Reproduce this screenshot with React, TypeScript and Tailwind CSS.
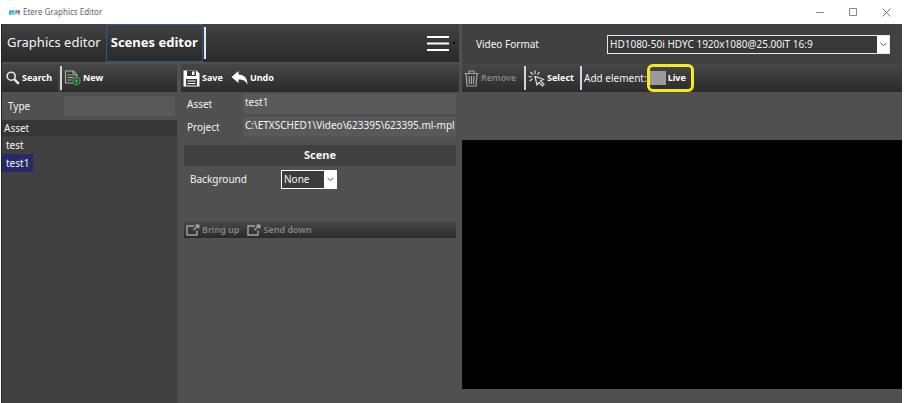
import { useState } from "react";
import type { ReactNode } from "react";

const scenes = ["test", "test1"];

const toolbar = "flex items-center bg-gradient-to-b from-[#474747] to-[#2b2b2b]";
const field = "h-5 min-w-0 flex-1 bg-[#595959] pb-1 pl-[2px] text-[10px] text-gray-100 outline-none";

function SearchIcon() {
  return (
    <svg className="shrink-0" width="14" height="14" viewBox="0 0 14 14" fill="none" stroke="#e8e8e8">
      <circle cx="5.2" cy="5.2" r="4" strokeWidth="1.6" />
      <path d="M8.2 8.2l4.6 4.6" strokeWidth="2.4" />
    </svg>
  );
}

function NewIcon() {
  return (
    <svg className="shrink-0" width="17" height="16" viewBox="0 0 17 16" fill="none" stroke="#a9b5a9" strokeWidth="1.1">
      <path d="M13 7V5L9.500 1H1.500v12H9" />
      <path d="M9 1v4h4M3.500 5h4M3.500 7.500h6M3.500 10h4" />
      <circle cx="12.500" cy="11" r="3.500" stroke="#3f9a46" fill="#2c3a2d" strokeWidth="1.300" />
      <path d="M12.500 9v4M10.500 11h4" stroke="#55b45b" />
    </svg>
  );
}

function SaveIcon() {
  return (
    <svg className="shrink-0" width="17" height="17" viewBox="0 0 17 17">
      <path d="M0.500 0.500h13l3 3v13h-16z" fill="#fff" />
      <path d="M4 0.500h9v5.500H4zM3 9h11v6.500H3z" fill="#383838" />
      <path d="M9 1.500h2.500v3.500H9zM4.500 10.500h8v1h-8zM4.500 13h8v1h-8z" fill="#fff" />
    </svg>
  );
}

function UndoIcon() {
  return (
    <svg className="shrink-0" width="17" height="14" viewBox="0 0 17 14" fill="#fff">
      <path d="M7.500 0v3.500C13 3.500 16.500 7 16.500 13.500C14.500 9.500 12 8.500 7.500 8.500V12L0.500 6z" />
    </svg>
  );
}

function TrashIcon() {
  return (
    <svg className="shrink-0" width="15" height="17" viewBox="0 0 15 17" fill="none" stroke="#a3a3a3" strokeWidth="1.200">
      <path d="M0.500 3.500h14M5 3.500v-2.500h5v2.500M2 3.500l1 12.500h9l1-12.500" />
      <path d="M5 6l0.500 8M7.500 6v8M10 6l-0.500 8" />
    </svg>
  );
}

function SelectIcon() {
  return (
    <svg className="shrink-0" width="17" height="17" viewBox="0 0 17 17" fill="none" stroke="#e0e0e0" strokeWidth="1.200">
      <path d="M7 0.500v3.500M2.500 2l2.200 2.700M0.500 6.500l3.500 0.500M1.500 11l3-2M11.500 2l-2 2.700" />
      <path d="M7 6.500l2 8.500 2-2.500 3.300 3.500 1.700-1.700-3.500-3.300 2.800-1.700z" />
    </svg>
  );
}

function LayerIcon() {
  return (
    <svg className="shrink-0" width="14" height="12" viewBox="0 0 14 12" fill="none" stroke="#a3a3a3" strokeWidth="1.400">
      <path d="M8 2H1v9h10V6.500" />
      <path d="M7.500 6l3-3" />
      <path d="M9.500 0.500h4v3.500l-1.500 0.500-2.500-2.500z" fill="#a3a3a3" stroke="none" />
    </svg>
  );
}

function Chevron() {
  return (
    <span className="pointer-events-none absolute inset-y-0 right-0 flex w-3 items-center justify-center bg-white">
      <svg width="7" height="5" viewBox="0 0 7 5" fill="none" stroke="#555">
        <path d="M0.500 1l3 2.500 3-2.500" />
      </svg>
    </span>
  );
}

function ToolButton({ icon, children, disabled }: { icon: ReactNode; children: ReactNode; disabled?: boolean }) {
  return (
    <button
      disabled={disabled}
      className="flex items-center gap-[2px] text-[9px] font-bold whitespace-nowrap text-white disabled:font-semibold disabled:text-[#858585]"
    >
      {icon}
      {children}
    </button>
  );
}

function Divider() {
  return <span className="w-[2px] shrink-0 self-stretch bg-gray-300" />;
}

function TitleBar() {
  return (
    <header className="flex h-6 items-center bg-white pl-2 text-[8px] text-[#666]">
      <svg width="11" height="5" viewBox="0 0 11 5" fill="none" strokeWidth="1.300">
        <path d="M0.500 2.500h2M0.500 1h2v1.500M0.500 1v3h2M4 0v4h1.500M3.500 1.500h2" stroke="#35b3c4" />
        <path d="M7 4V1h1.500" stroke="#4a7fc0" />
        <path d="M9 1h1.500v1.500H9zM9 4h1.500" stroke="#c45aa8" />
      </svg>
      <h1 className="ml-[3px] flex-1">Etere Graphics Editor</h1>
      <div className="flex gap-6 pr-[11px]">
        <button aria-label="Minimize">
          <svg width="9" height="9" fill="none" stroke="#888"><path d="M0 4.500h8" /></svg>
        </button>
        <button aria-label="Maximize">
          <svg width="9" height="9" fill="none" stroke="#888"><path d="M0.500 0.500h7v7h-7z" /></svg>
        </button>
        <button aria-label="Close">
          <svg width="9" height="9" fill="none" stroke="#777"><path d="M0.500 0.500l8 8M8.500 0.500l-8 8" /></svg>
        </button>
      </div>
    </header>
  );
}

function ScenesPanel({ selected, onSelect }: { selected: string; onSelect: (name: string) => void }) {
  return (
    <section className="flex flex-col">
      <div className="flex h-7">
        <div className={`${toolbar} w-14 pl-1`}>
          <ToolButton icon={<SearchIcon />}>Search</ToolButton>
        </div>
        <div className="flex bg-[#444] py-[2px] pl-[2px]"><Divider /></div>
        <div className={`${toolbar} flex-1 pl-[2px]`}>
          <ToolButton icon={<NewIcon />}>New</ToolButton>
        </div>
      </div>
      <div className="flex h-7 items-center pr-[2px] pl-[6px]">
        <label htmlFor="type" className="w-14">Type</label>
        <input id="type" className={field} />
      </div>
      <div className="flex-1 bg-[#404040]">
        <h2 className="flex h-4 items-center bg-[#363636] pl-[2px]">Asset</h2>
        <ul className="flex flex-col items-start">
          {scenes.map((name) => (
            <li key={name}>
              <button
                onClick={() => onSelect(name)}
                className={`flex h-[18px] items-center px-1 ${selected === name ? "bg-[#282868]" : ""}`}
              >
                {name}
              </button>
            </li>
          ))}
        </ul>
      </div>
    </section>
  );
}

function ScenePanel({ asset }: { asset: string }) {
  return (
    <section className="flex flex-col">
      <div className={`${toolbar} h-7 gap-2 pl-[2px]`}>
        <ToolButton icon={<SaveIcon />}>Save</ToolButton>
        <ToolButton icon={<UndoIcon />}>Undo</ToolButton>
      </div>
      <div className="flex flex-col gap-[3px] pt-[2px] pr-[3px] pl-[6px]">
        <div className="flex items-center">
          <label htmlFor="asset" className="w-14">Asset</label>
          <input id="asset" className={field} value={asset} readOnly />
        </div>
        <div className="flex items-center">
          <label htmlFor="project" className="w-14">Project</label>
          <input id="project" className={field} defaultValue="C:\ETXSCHED1\Video\623395\623395.ml-mpl" />
        </div>
      </div>
      <div className="flex flex-col pt-2 pr-[3px] pl-[3px]">
        <h2 className="flex h-[21px] items-center justify-center bg-[#404040] text-[11px] font-bold">Scene</h2>
        <div className="flex items-center pt-1 pl-[6px]">
          <label htmlFor="background" className="w-[91px]">Background</label>
          <span className="relative w-14 border border-white">
            <select id="background" className="block h-[17px] w-full appearance-none bg-[#3b3b3b] pl-[2px] text-[10px] outline-none">
              <option>None</option>
            </select>
            <Chevron />
          </span>
        </div>
        <div className={`${toolbar} mt-[33px] h-4 gap-2 pl-[2px]`}>
          <ToolButton icon={<LayerIcon />} disabled>Bring up</ToolButton>
          <ToolButton icon={<LayerIcon />} disabled>Send down</ToolButton>
        </div>
      </div>
    </section>
  );
}

function PreviewPanel() {
  return (
    <section className="flex flex-col">
      <div className="flex h-10 items-center justify-between bg-[#414141] pr-3 pl-[14px]">
        <label htmlFor="format">Video Format</label>
        <span className="relative w-[283px] border border-gray-200">
          <select id="format" className="block h-[17px] w-full appearance-none bg-[#383838] pl-[2px] text-[10px] outline-none">
            <option>HD1080-50i HDYC 1920x1080@25.00iT 16:9</option>
          </select>
          <Chevron />
        </span>
      </div>
      <div className={`${toolbar} h-7`}>
        <div className="w-[62px] shrink-0 pl-[2px]">
          <ToolButton icon={<TrashIcon />} disabled>Remove</ToolButton>
        </div>
        <div className="flex h-6"><Divider /></div>
        <div className="w-[54px] shrink-0 pl-[2px]">
          <ToolButton icon={<SelectIcon />}>Select</ToolButton>
        </div>
        <div className="flex h-6"><Divider /></div>
        <span className="pl-[2px] whitespace-nowrap">Add element:</span>
        <div className="flex h-7 items-center rounded-md border-3 border-[#f7ea1c] pr-[5px]">
          <ToolButton icon={<span className="h-[14px] w-4 bg-[#9b9b9b]" />}>Live</ToolButton>
        </div>
      </div>
      <div className="h-12" />
      <div className="flex-1 bg-black" />
      <div className="h-[14px]" />
    </section>
  );
}

export default function App() {
  const [selected, setSelected] = useState("test1");
  const [tab, setTab] = useState("scenes");

  return (
    <div className="flex min-h-screen flex-col bg-white pr-[3px] pl-px font-['Noto_Sans',sans-serif] text-[10px] text-gray-100">
      <TitleBar />
      <main className="grid flex-1 grid-cols-[minmax(0,457fr)_minmax(0,440fr)] gap-[3px] border-l border-[#222] bg-[#505050]">
        <div className="flex flex-col">
          <nav className="flex h-[38px] items-center bg-gradient-to-b from-[#414141] to-[#2a2a2a] text-[13px]">
            <button
              onClick={() => setTab("graphics")}
              className={`h-full border px-1 ${tab === "graphics" ? "border-[#285a8c] font-bold text-white" : "border-transparent"}`}
            >
              Graphics editor
            </button>
            <button
              onClick={() => setTab("scenes")}
              className={`h-full border px-1 ${tab === "scenes" ? "border-[#285a8c] font-bold text-white" : "border-transparent"}`}
            >
              Scenes editor
            </button>
            <span className="ml-px h-8 w-[2px] bg-gray-200" />
            <button aria-label="Menu" className="ml-auto flex items-center gap-1 pr-1">
              <svg width="22" height="15" viewBox="0 0 22 15" stroke="#fff" strokeWidth="2">
                <path d="M0 1h22M0 7.500h22M0 14h22" />
              </svg>
              <span className="h-[2px] w-[2px] bg-[#111]" />
            </button>
          </nav>
          <div className="grid flex-1 grid-cols-[minmax(0,175fr)_minmax(0,278fr)] gap-1 pt-[2px]">
            <ScenesPanel selected={selected} onSelect={setSelected} />
            <ScenePanel asset={selected} />
          </div>
        </div>
        <PreviewPanel />
      </main>
    </div>
  );
}
